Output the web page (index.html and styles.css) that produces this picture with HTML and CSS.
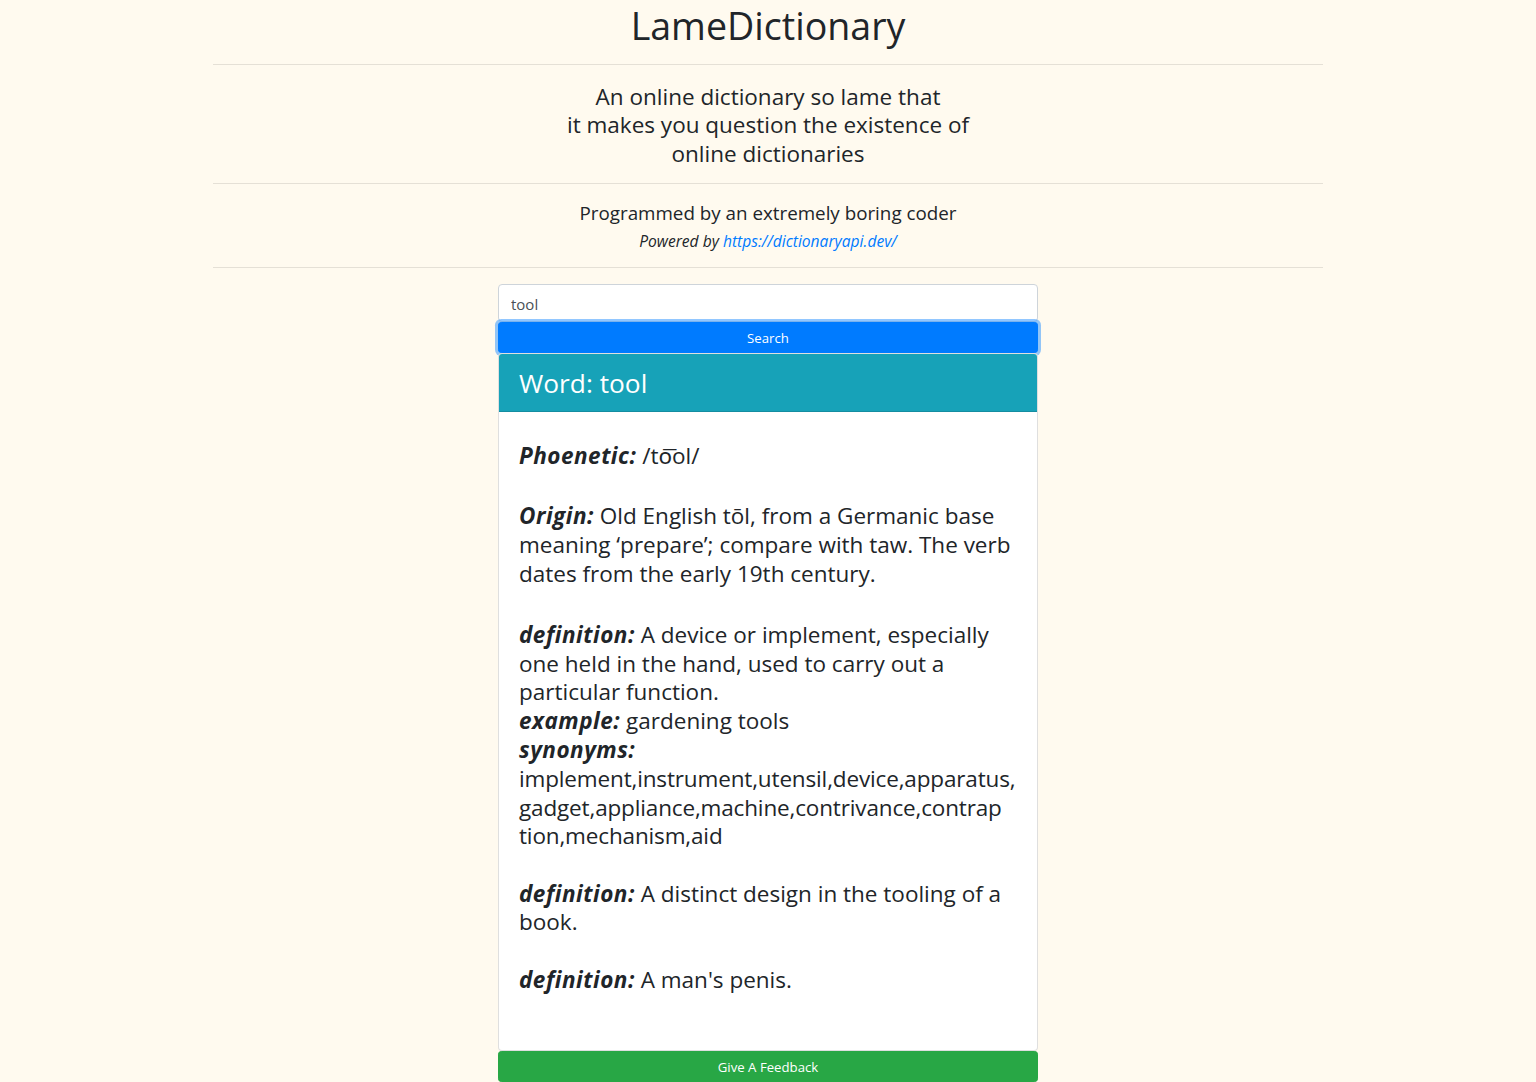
FILE: index.html
```html
<!DOCTYPE html>
<html lang="en">
<head>
<meta charset="utf-8">
<title>LameDictionary</title>
<link rel="stylesheet" href="styles.css">
</head>
<body>
<div class="container">
  <h1 class="title">LameDictionary</h1>
  <hr class="rule rule-first">
  <h4 class="tagline">An online dictionary so lame that<br>it makes you question the existence of<br>online dictionaries</h4>
  <hr class="rule rule-second">
  <h5 class="credit">Programmed by an extremely boring coder</h5>
  <h6 class="powered">Powered by <a href="#">https://dictionaryapi.dev/</a></h6>
  <hr class="rule">
  <div class="search-col">
    <input class="search-input" type="text" value="tool">
    <button class="btn btn-primary" type="button">Search</button>
    <div class="card">
      <div class="card-header">Word: tool</div>
      <div class="card-body">
        <p class="entry entry-phonetic"><span class="label">Phoenetic:</span> /to͞ol/</p>
        <p class="entry entry-origin"><span class="label">Origin:</span> Old English tōl, from a Germanic base meaning ‘prepare’; compare with taw. The verb dates from the early 19th century.</p>
        <div class="entry entry-def1">
          <div><span class="label">definition:</span> A device or implement, especially one held in the hand, used to carry out a particular function.</div>
          <div><span class="label">example:</span> gardening tools</div>
          <div><span class="label">synonyms:</span> <span class="synonyms">implement,instrument,utensil,device,apparatus,<wbr>gadget,appliance,machine,contrivance,contrap<wbr>tion,mechanism,aid</span></div>
        </div>
        <p class="entry entry-def2"><span class="label">definition:</span> A distinct design in the tooling of a book.</p>
        <p class="entry entry-def3"><span class="label">definition:</span> A man's penis.</p>
      </div>
    </div>
    <button class="btn btn-success" type="button">Give A Feedback</button>
  </div>
</div>
</body>
</html>
```

FILE: styles.css
```css
* { box-sizing: border-box; }

body {
  margin: 0;
  background: #fffaef;
  color: #212529;
  font-family: "Open Sans", "Noto Sans", sans-serif;
  font-size: 15px;
}

.container {
  width: 1110px;
  margin: 0 auto;
}

.title {
  margin: 0;
  font-size: 37.6px;
  line-height: 52px;
  font-weight: 400;
  text-align: center;
}

.rule {
  border: 0;
  border-top: 1px solid rgba(0, 0, 0, 0.1);
  margin: 16px 0;
  height: 0;
}

.rule-first { margin-top: 12px; }
.rule-second { margin-top: 14.5px; }

.tagline {
  margin: 0;
  padding-top: 1.5px;
  font-size: 22.5px;
  line-height: 28.8px;
  font-weight: 400;
  text-align: center;
}

.credit {
  margin: 0 0 8px;
  padding-top: 2px;
  font-size: 18.8px;
  line-height: 22px;
  font-weight: 400;
  text-align: center;
}

.powered {
  margin: 0;
  padding-top: 1px;
  font-size: 15.6px;
  line-height: 17.6px;
  font-weight: 400;
  font-style: italic;
  text-align: center;
}

.powered a {
  color: #007bff;
  text-decoration: none;
}

.search-col {
  width: 540px;
  margin: 0 auto;
}

.search-input {
  display: block;
  width: 100%;
  height: 38px;
  padding: 7px 12px 5px;
  font-family: inherit;
  font-size: 15px;
  color: #495057;
  background: #fff;
  border: 1px solid #ced4da;
  border-radius: 4px;
  outline: none;
}

.btn {
  display: block;
  width: 100%;
  border: 1px solid transparent;
  border-radius: 3.2px;
  color: #fff;
  font-family: inherit;
  font-size: 13.2px;
  line-height: 21px;
  padding: 5px 8px 3px;
  text-align: center;
  cursor: pointer;
}

.btn-primary {
  background: #007bff;
  border-color: #007bff;
  box-shadow: 0 0 0 3px rgba(38, 143, 255, 0.5);
}

.btn-success {
  background: #28a745;
  border-color: #28a745;
}

.card {
  position: relative;
  background: #fff;
  border: 1px solid rgba(0, 0, 0, 0.125);
  border-radius: 4px;
  overflow: hidden;
}

.card-header {
  background: #17a2b8;
  color: #fff;
  padding: 13px 20px 10px;
  font-size: 26.3px;
  line-height: 33.6px;
  border-bottom: 1px solid rgba(0, 0, 0, 0.125);
}

.card-body {
  padding: 30px 20px 55px;
  font-size: 22.5px;
  line-height: 28.8px;
  overflow-wrap: break-word;
}

.entry { margin: 0; }
.entry-phonetic { margin-bottom: 32px; }
.entry-origin { margin-bottom: 32px; }
.entry-def1 { margin-bottom: 28.5px; }
.entry-def2 { margin-bottom: 29px; }

.label {
  font-weight: 700;
  font-style: italic;
  letter-spacing: 0.5px;
}

.synonyms {
  letter-spacing: -0.15px;
}
```
